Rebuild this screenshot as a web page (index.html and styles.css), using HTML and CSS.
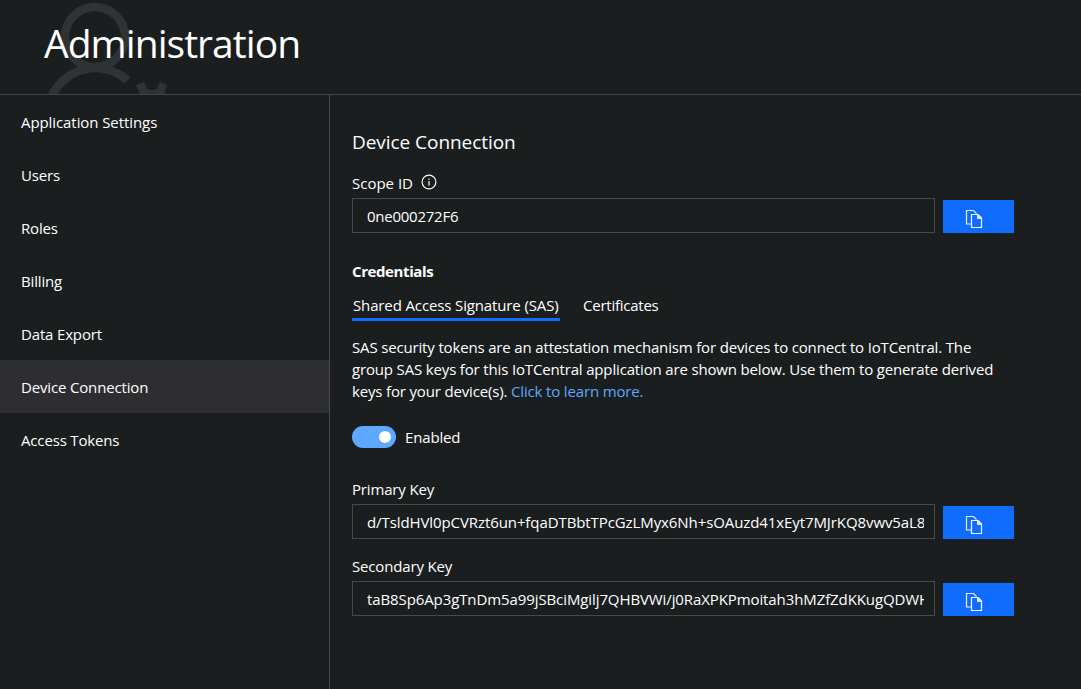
FILE: index.html
```html
<!DOCTYPE html>
<html lang="en">
<head>
<meta charset="utf-8">
<title>Administration</title>
<link rel="stylesheet" href="styles.css">
</head>
<body>
<svg class="defs" width="0" height="0" aria-hidden="true">
  <symbol id="copy" viewBox="0 0 18 20">
    <path d="M6 15H1.500V1.500H8.500L11.500 4.500" fill="none" stroke="#e4edff" stroke-width="1.200"/>
    <path d="M6.500 5.500H13L16.500 9V18.500H6.500Z" fill="#0f6cff" stroke="#fff" stroke-width="1.200"/>
    <path d="M12.500 5.500V9.500H16.500V9L13 5.500Z" fill="#cfe0ff" stroke="#fff" stroke-width=".8"/>
  </symbol>
</svg>
<header class="header">
  <svg class="emblem" width="130" height="94" viewBox="0 0 130 94" fill="none" stroke="#2f3334" stroke-width="8.500" aria-hidden="true">
    <circle cx="55" cy="37" r="30"/>
    <path d="M11 98A47.800 47.800 0 0 1 87.500 80.500"/>
    <path d="M96 85L104 82L108 90H116L120 82L127 85L124 94H100Z" fill="#2f3334" stroke="none"/>
  </svg>
  <h1 class="title">Administration</h1>
</header>
<div class="body">
  <nav class="nav">
    <a class="item wide">Application Settings</a>
    <a class="item">Users</a>
    <a class="item">Roles</a>
    <a class="item">Billing</a>
    <a class="item">Data Export</a>
    <a class="item selected">Device Connection</a>
    <a class="item">Access Tokens</a>
  </nav>
  <main class="main">
    <h2 class="heading">Device Connection</h2>
    <div class="label scope"><span>Scope ID</span>
      <svg width="16" height="16" viewBox="0 0 16 16" fill="none" stroke="#fff" stroke-width="1.200"><circle cx="8" cy="8" r="6.900"/><path d="M8 7V11.500M8 4.500V5.700"/></svg>
    </div>
    <div class="row"><div class="field"><span class="value scope-value">0ne000272F6</span></div><button class="copy"><svg width="18" height="20"><use href="#copy"/></svg></button></div>
    <h3 class="credentials">Credentials</h3>
    <div class="tabs"><span class="tab active">Shared Access Signature (SAS)</span><span class="tab other">Certificates</span></div>
    <p class="text">SAS security tokens are an attestation mechanism for devices to connect to IoTCentral. The<br>group SAS keys for this IoTCentral application are shown below. Use them to generate derived<br>keys for your device(s). <a class="link">Click to learn more.</a></p>
    <div class="toggle"><span class="switch"></span><span>Enabled</span></div>
    <div class="label primary">Primary Key</div>
    <div class="row"><div class="field"><span class="value primary-value">d/TsldHVl0pCVRzt6un+fqaDTBbtTPcGzLMyx6Nh+sOAuzd41xEyt7MJrKQ8vwv5aL8</span></div><button class="copy"><svg width="18" height="20"><use href="#copy"/></svg></button></div>
    <div class="label secondary">Secondary Key</div>
    <div class="row"><div class="field"><span class="value secondary-value">taB8Sp6Ap3gTnDm5a99jSBciMgilj7QHBVWi/j0RaXPKPmoitah3hMZfZdKKugQDWH</span></div><button class="copy"><svg width="18" height="20"><use href="#copy"/></svg></button></div>
  </main>
</div>
</body>
</html>
```

FILE: styles.css
```css
* { box-sizing: border-box; }
body {
  margin: 0;
  height: 689px;
  display: flex;
  flex-direction: column;
  overflow: hidden;
  background: #1b1e1f;
  color: #fff;
  font: 15px/22px "Open Sans", "Noto Sans", sans-serif;
  letter-spacing: -0.16px;
}
h1, h2, h3, p { margin: 0; font-weight: 400; }
.defs { position: absolute; }
.header {
  position: relative;
  height: 95px;
  flex: none;
  padding: 16px 0 0 44px;
  border-bottom: 1px solid #424445;
}
.emblem { position: absolute; left: 40px; top: 0; }
.title { position: relative; font-size: 39px; line-height: 54px; letter-spacing: -0.95px; white-space: nowrap; }
.body { flex: 1; display: flex; }
.nav { width: 330px; flex: none; border-right: 1px solid #48494b; }
.item { display: block; height: 53px; padding: 1px 21px 0; line-height: 53px; }
.wide { letter-spacing: -0.08px; }
.selected { background: #2e2e32; }
.main { width: 684px; padding: 32px 0 0 22px; white-space: nowrap; }
.heading { font-size: 19px; line-height: 30px; letter-spacing: -0.05px; }
.label { height: 22px; line-height: 22px; }
.scope { display: flex; gap: 8px; margin: 15px 0 4px; height: 22px; letter-spacing: 0; }
.scope svg { margin-top: 2px; }
.row { display: flex; gap: 8px; height: 36px; align-items: flex-start; }
.field { width: 583px; flex: none; height: 35px; border: 1px solid #48494b; padding: 0 10px 0 14px; line-height: 35px; }
.value { display: block; overflow: hidden; }
.scope-value { letter-spacing: -0.25px; }
.primary-value { letter-spacing: -0.09px; }
.secondary-value { letter-spacing: -0.1px; }
.copy { width: 71px; height: 33px; margin: 2px 0 0; padding: 5px 0 0 0; border: 0; background: #0f6cff; display: flex; justify-content: center; align-items: center; flex: none; }
.copy svg { margin-right: 9px; }
.credentials { font-size: 15px; line-height: 22px; font-weight: 700; letter-spacing: -0.4px; margin-top: 26px; }
.tabs { display: flex; gap: 23px; margin-top: 12px; }
.tab { height: 27px; line-height: 23px; border-bottom: 3px solid transparent; }
.active { width: 208px; padding-left: 1px; border-color: #0f6cff; letter-spacing: -0.13px; }
.other { letter-spacing: -0.24px; }
.text { margin-top: 15px; }
.link { color: #5ea8ff; }
.toggle { display: flex; align-items: center; gap: 9px; margin-top: 24px; height: 22px; }
.switch { width: 44px; height: 22px; border-radius: 11px; background: #5ea8ff; display: flex; align-items: center; justify-content: flex-end; padding-right: 5px; }
.switch::after { content: ""; width: 12px; height: 12px; border-radius: 50%; background: #fff; }
.primary { margin: 30px 0 4px; }
.secondary { margin: 15px 0 4px; }
```
